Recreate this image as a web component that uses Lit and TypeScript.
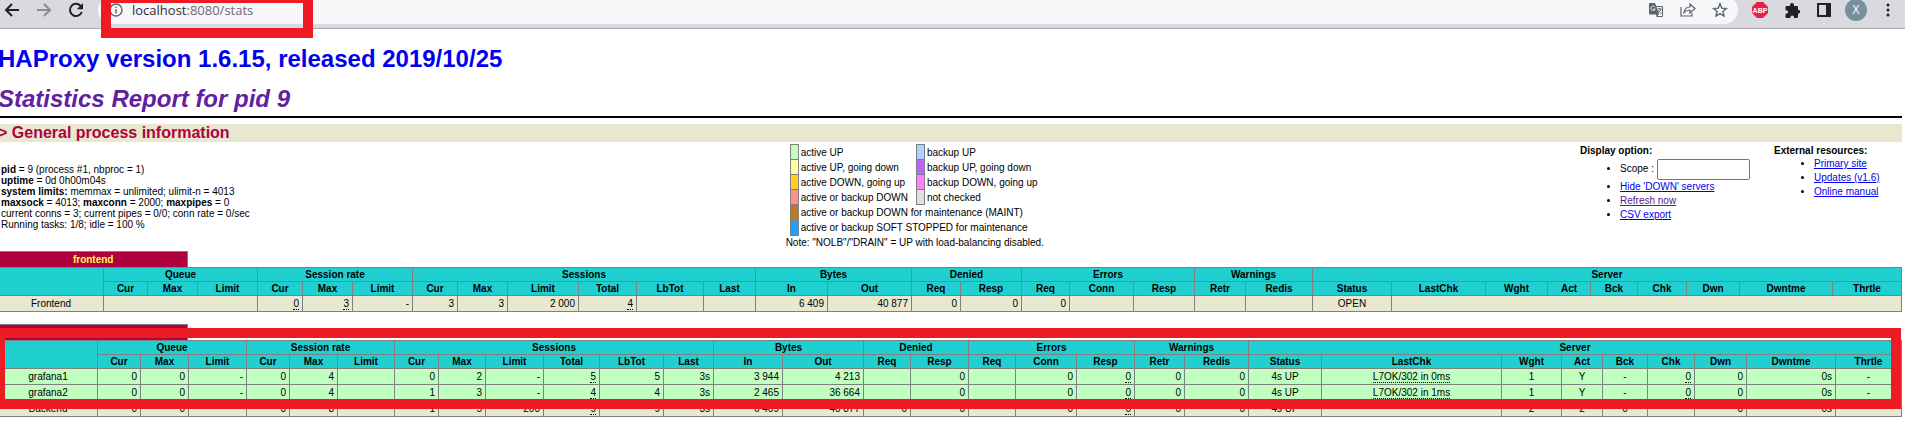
import { LitElement, html, css, nothing } from "lit";
import { customElement, property } from "lit/decorators.js";

interface Group { label: string; columns: string[]; }

const GROUPS: Group[] = [
  { label: "Queue", columns: ["Cur", "Max", "Limit"] },
  { label: "Session rate", columns: ["Cur", "Max", "Limit"] },
  { label: "Sessions", columns: ["Cur", "Max", "Limit", "Total", "LbTot", "Last"] },
  { label: "Bytes", columns: ["In", "Out"] },
  { label: "Denied", columns: ["Req", "Resp"] },
  { label: "Errors", columns: ["Req", "Conn", "Resp"] },
  { label: "Warnings", columns: ["Retr", "Redis"] },
  { label: "Server", columns: ["Status", "LastChk", "Wght", "Act", "Bck", "Chk", "Dwn", "Dwntme", "Thrtle"] },
];

interface Cell { text: string; span?: number; align?: "center"; tip?: boolean; }
interface Row { name: string; kind: "plain" | "up"; cells: Cell[]; }
interface Proxy { name: string; weights: number[]; rows: Row[]; marked?: boolean; }

const n = (text: string): Cell => ({ text });
const t = (text: string): Cell => ({ text, tip: true });
const c = (text: string): Cell => ({ text, align: "center" });
const tc = (text: string): Cell => ({ text, align: "center", tip: true });
const gap = (span: number): Cell => ({ text: "", span });

const PROXIES: Proxy[] = [
  {
    name: "frontend",
    weights: [105, 44, 50, 60, 45, 50, 60, 45, 50, 71, 58, 67, 52, 72, 84, 49, 61, 48, 64, 61, 51, 67, 79, 94, 62, 43, 47, 49, 53, 93, 69],
    rows: [
      {
        name: "Frontend", kind: "plain",
        cells: [gap(3), t("0"), t("3"), n("-"), n("3"), n("3"), n("2 000"), t("4"), n(""), n(""), n("6 409"), n("40 877"),
          n("0"), n("0"), n("0"), n(""), n(""), n(""), n(""), c("OPEN"), gap(8)],
      },
    ],
  },
  {
    name: "backend",
    marked: true,
    weights: [99, 43, 48, 58, 43, 48, 57, 44, 47, 58, 56, 64, 50, 69, 81, 47, 58, 47, 61, 58, 50, 64, 73, 180, 60, 41, 45, 47, 52, 89, 66],
    rows: [
      {
        name: "grafana1", kind: "up",
        cells: [n("0"), n("0"), n("-"), n("0"), n("4"), n(""), n("0"), n("2"), n("-"), t("5"), n("5"), n("3s"), n("3 944"), n("4 213"),
          n(""), n("0"), n(""), n("0"), t("0"), n("0"), n("0"), c("4s UP"), tc("L7OK/302 in 0ms"), c("1"), c("Y"), c("-"), t("0"), n("0"), n("0s"), c("-")],
      },
      {
        name: "grafana2", kind: "up",
        cells: [n("0"), n("0"), n("-"), n("0"), n("4"), n(""), n("1"), n("3"), n("-"), t("4"), n("4"), n("3s"), n("2 465"), n("36 664"),
          n(""), n("0"), n(""), n("0"), t("0"), n("0"), n("0"), c("4s UP"), tc("L7OK/302 in 1ms"), c("1"), c("Y"), c("-"), t("0"), n("0"), n("0s"), c("-")],
      },
      {
        name: "Backend", kind: "plain",
        cells: [n("0"), n("0"), n(""), n("0"), n("8"), n(""), n("1"), n("5"), n("200"), t("9"), n("9"), n("3s"), n("6 409"), n("40 877"),
          n("0"), n("0"), n(""), n("0"), t("0"), n("0"), n("0"), c("4s UP"), c(""), c("2"), c("2"), c("0"), n(""), n("0"), n("0s"), n("")],
      },
    ],
  },
];

@customElement("browser-bar")
class BrowserBar extends LitElement {
  static styles = css`
    :host { display: block; position: relative; font-family: "Open Sans", "Noto Sans", sans-serif; }
    .bar { display: flex; align-items: flex-end; height: 28px; overflow: hidden; background: #d9dadf; border-bottom: 1px solid #a9a9ae; }
    button { display: flex; align-items: center; justify-content: center; border: 0; padding: 0; background: none; color: #202124; }
    svg { display: block; }
    .nav { display: flex; width: 98px; height: 36px; flex: none; }
    .nav button { width: 24px; margin-right: 8px; }
    .nav .off { color: #8b8c90; }
    .pill { flex: 1; display: flex; align-items: center; height: 28px; margin-bottom: 4px; border-radius: 14px; background: #f5f7f9; padding: 0 8px; }
    .addr { flex: 1; font-size: 13px; line-height: 20px; color: #6b6c70; margin-left: 6px; }
    .host { color: #303134; }
    .pill button { width: 20px; height: 20px; margin-left: 12px; color: #5f6368; }
    .pill .info { margin-left: 0; }
    .ext { display: flex; align-items: center; height: 36px; gap: 12px; padding: 0 7px 0 12px; flex: none; }
    .ext button { width: 20px; height: 20px; }
    .ext .face { width: 22px; height: 22px; margin: 0 -1px; border-radius: 11px; background: #78909c; color: #fff; font: 12px/22px "Open Sans", sans-serif; }
    .mark { position: absolute; left: 101px; top: -7px; width: 192px; height: 25px; border: 10px solid #ed1c24; pointer-events: none; }
  `;
  render() {
    return html`
      <div class="bar">
        <div class="nav">
          <button aria-label="Back"><svg width="16" height="16" viewBox="0 0 16 16" fill="none" stroke="currentColor" stroke-width="2"><path d="M15 8H2M8 2 2 8l6 6"/></svg></button>
          <button class="off" aria-label="Forward"><svg width="16" height="16" viewBox="0 0 16 16" fill="none" stroke="currentColor" stroke-width="2"><path d="M1 8h13M8 2l6 6-6 6"/></svg></button>
          <button aria-label="Reload"><svg width="16" height="16" viewBox="0 0 16 16" fill="none" stroke="currentColor" stroke-width="2"><path d="M13.800 10A6.100 6.100 0 1 1 12.400 3.600L14 5.200"/><path d="M15 1v6.200H8.800z" fill="currentColor" stroke="none"/></svg></button>
        </div>
        <div class="pill">
          <button class="info" aria-label="Site information"><svg width="14" height="14" viewBox="0 0 14 14" fill="none" stroke="currentColor" stroke-width="1.400"><circle cx="7" cy="7" r="6"/><path d="M7 6v4.500M7 3.500V5"/></svg></button>
          <div class="addr"><span class="host">localhost</span>:8080/stats</div>
          <button aria-label="Translate"><svg width="14" height="14" viewBox="0 0 14 14"><path d="M1 0h5l1.200 3H13a1 1 0 0 1 1 1v9a1 1 0 0 1-1 1H7.500L7 11.500H1a1 1 0 0 1-1-1V1a1 1 0 0 1 1-1z" fill="currentColor"/><path d="M7.600 4H13v9H8.500l1.500-2z" fill="#f5f7f9"/><path d="M6 4.200A2.200 2.200 0 1 0 6.200 6H4.200" stroke="#f5f7f9" fill="none"/><path d="M8.500 6h4M10.500 5v1M12 6c-.5 2-2 3-3 3.500M9.500 7.500c.8 1.500 2 2.500 3 3" stroke="currentColor" fill="none"/></svg></button>
          <button aria-label="Share"><svg width="16" height="14" viewBox="0 0 16 14" fill="none" stroke="currentColor" stroke-width="1.200"><path d="M1 4v9h11v-3"/><path d="M4 9.500C4.500 6 6.500 4 10 4V1l5 4.500-5 4.500V7C7.500 7 5.500 7.800 4 9.500z"/></svg></button>
          <button aria-label="Bookmark"><svg width="16" height="16" viewBox="0 0 16 16" fill="none" stroke="currentColor" stroke-width="1.400"><path d="m8 1.800 1.800 4.300 4.600.4-3.500 3 1.100 4.600L8 11.600l-4 2.500 1.100-4.600-3.500-3 4.600-.4z"/></svg></button>
        </div>
        <div class="ext">
          <button aria-label="Ad blocker"><svg width="16" height="16" viewBox="0 0 16 16"><path d="M5 0h6l5 5v6l-5 5H5l-5-5V5z" fill="#ed1e45"/><text x="8" y="11" text-anchor="middle" font-size="7" font-weight="700" font-family="Liberation Sans" fill="#fff">ABP</text></svg></button>
          <button aria-label="Extensions"><svg width="15" height="15" viewBox="0 0 15 15" fill="currentColor"><path d="M1.500 3H5V2a2 2 0 0 1 4 0v1h3a1 1 0 0 1 1 1v3h.5a1.700 1.700 0 0 1 0 3.500H13V14a1 1 0 0 1-1 1H9v-.8a1.800 1.800 0 0 0-3.600 0v.8H1.500a1 1 0 0 1-1-1v-3.200h.8a1.700 1.700 0 0 0 0-3.500H.5V4a1 1 0 0 1 1-1z"/></svg></button>
          <button aria-label="Side panel"><svg width="14" height="14" viewBox="0 0 14 14"><path d="M0 0h14v14H0zM2 2v10h7V2z" fill="currentColor" fill-rule="evenodd"/></svg></button>
          <button class="face" aria-label="Profile">X</button>
          <button aria-label="Menu"><svg width="4" height="14" viewBox="0 0 4 14" fill="currentColor"><circle cx="2" cy="2" r="1.500"/><circle cx="2" cy="7" r="1.500"/><circle cx="2" cy="12" r="1.500"/></svg></button>
        </div>
      </div>
      <div class="mark"></div>
    `;
  }
}

@customElement("proxy-table")
class ProxyTable extends LitElement {
  @property({ attribute: false }) proxy!: Proxy;
  static styles = css`
    :host { display: block; position: relative; }
    h4 { box-sizing: border-box; width: 10%; height: 16px; margin: 0; border: 1px solid gray; border-bottom: 0;
      background: #b00040; color: #ffff40; font-size: 10px; line-height: 16px; text-align: center; }
    table { width: 100%; table-layout: fixed; border-collapse: collapse; font-size: 10px; line-height: 12px; }
    th, td { border: 1px solid gray; white-space: nowrap; }
    th { padding: 0; background: #20d0d0; }
    td { padding: 0 3px; text-align: right; }
    .head { height: 14px; }
    .row { height: 16px; }
    .plain { background: #e8e8d0; }
    .up { background: #c0ffc0; }
    .name, .center { text-align: center; }
    .tip { text-decoration: none; display: inline-block; line-height: 11px; border-bottom: 1px dotted #000; }
    .mark { position: absolute; inset: 4px 1px 8px -3px; border: 10px solid #ed1c24; pointer-events: none; }
  `;
  render() {
    const p = this.proxy;
    const total = p.weights.reduce((a, b) => a + b, 0);
    return html`
      <h4>${p.name}</h4>
      <table>
        <colgroup>${p.weights.map((w) => html`<col style="width:${(w / total) * 100}%">`)}</colgroup>
        <thead>
          <tr class="head"><th rowspan="2"></th>${GROUPS.map((g) => html`<th colspan=${g.columns.length}>${g.label}</th>`)}</tr>
          <tr class="head">${GROUPS.map((g) => g.columns.map((l) => html`<th>${l}</th>`))}</tr>
        </thead>
        <tbody>
          ${p.rows.map((r) => html`<tr class="row ${r.kind}"><td class="name">${r.name}</td>${r.cells.map((x) =>
            html`<td class=${x.align ?? "num"} colspan=${x.span ?? 1}>${x.tip ? html`<u class="tip">${x.text}</u>` : x.text}</td>`)}</tr>`)}
        </tbody>
      </table>
      ${p.marked ? html`<div class="mark"></div>` : nothing}
    `;
  }
}

@customElement("app-root")
class AppRoot extends LitElement {
  static styles = css`
    :host { display: block; min-height: 100vh; overflow: hidden; background: #fff; color: #000;
      font-family: "Liberation Sans", Arial, sans-serif; font-size: 10px; line-height: 11px; }
    main { margin: 0 3px 0 -2px; }
    h1, h2 { margin: 0; font-size: 24px; line-height: 28px; }
    h1 { padding-top: 16px; }
    h1 a { color: #0000ee; text-decoration: none; }
    h2 { padding-top: 12px; font-style: italic; }
    h2 a { color: #6020a0; text-decoration: none; }
    hr { height: 2px; margin: 3px 0 6px; border: 0; background: #000; }
    h3 { margin: 0; font-size: 16px; line-height: 18px; color: #b00040; background: #e8e8d0; }
    .process { display: flex; padding-bottom: 4px; }
    .facts { width: 41%; box-sizing: border-box; margin: 0; padding: 22px 0 0 3px; }
    .legend { flex: 1; padding: 2px 0 0 4px; }
    .keys { border-collapse: collapse; margin-left: 7px; }
    .keys td { height: 15px; padding: 0 2px; }
    .keys .swatch { width: 8px; box-sizing: border-box; padding: 0; border: 1px solid gray; }
    .keys .wide { padding-right: 8px; }
    .note { margin: 1px 0 0 3px; }
    .active-up { background: #c0ffc0; }
    .backup-up { background: #b0d0ff; }
    .active-going-down { background: #ffffa0; }
    .backup-going-down { background: #c060ff; }
    .active-going-up { background: #ffd020; }
    .backup-going-up { background: #ff80ff; }
    .down { background: #ff9090; }
    .unchecked { background: #e0e0e0; }
    .maint { background: #c07820; }
    .soft { background: #20a0ff; }
    .options, .external { padding-top: 3px; line-height: 12px; }
    .options { width: 194px; }
    .external { width: 128px; }
    ul { margin: 0; padding: 0 0 0 40px; line-height: 14px; }
    .options ul { padding-top: 2px; }
    a { color: #0000ee; }
    a.seen { color: #551a8b; }
    input { box-sizing: border-box; width: 93px; height: 21px; border: 1px solid #767676; border-radius: 2px; vertical-align: middle; font: inherit; }
    .proxies { display: grid; gap: 12px; min-height: 176px; align-content: start; }
    .process { height: 105px; }
  `;
  private keys: [string, string, string, string][] = [
    ["active-up", "active UP", "backup-up", "backup UP"],
    ["active-going-down", "active UP, going down", "backup-going-down", "backup UP, going down"],
    ["active-going-up", "active DOWN, going up", "backup-going-up", "backup DOWN, going up"],
    ["down", "active or backup DOWN", "unchecked", "not checked"],
  ];
  render() {
    return html`
      <browser-bar></browser-bar>
      <main>
        <h1><a href="#home">HAProxy version 1.6.15, released 2019/10/25</a></h1>
        <h2><a href="#stats">Statistics Report for pid 9</a></h2>
        <hr>
        <h3>&gt; General process information</h3>
        <section class="process">
          <p class="facts">
            <b>pid</b> = 9 (process #1, nbproc = 1)<br>
            <b>uptime</b> = 0d 0h00m04s<br>
            <b>system limits:</b> memmax = unlimited; ulimit-n = 4013<br>
            <b>maxsock</b> = 4013; <b>maxconn</b> = 2000; <b>maxpipes</b> = 0<br>
            current conns = 3; current pipes = 0/0; conn rate = 0/sec<br>
            Running tasks: 1/8; idle = 100 %
          </p>
          <div class="legend">
            <table class="keys">
              ${this.keys.map(([a, al, b, bl]) => html`<tr><td class="swatch ${a}"></td><td class="wide">${al}</td><td class="swatch ${b}"></td><td>${bl}</td></tr>`)}
              <tr><td class="swatch maint"></td><td colspan="3">active or backup DOWN for maintenance (MAINT)</td></tr>
              <tr><td class="swatch soft"></td><td colspan="3">active or backup SOFT STOPPED for maintenance</td></tr>
            </table>
            <p class="note">Note: "NOLB"/"DRAIN" = UP with load-balancing disabled.</p>
          </div>
          <div class="options">
            <b>Display option:</b>
            <ul>
              <li><label for="scope">Scope :</label> <input id="scope" type="text"></li>
              <li><a href="#hide">Hide 'DOWN' servers</a></li>
              <li><a class="seen" href="#refresh">Refresh now</a></li>
              <li><a href="#csv">CSV export</a></li>
            </ul>
          </div>
          <div class="external">
            <b>External resources:</b>
            <ul>
              <li><a href="#site">Primary site</a></li>
              <li><a href="#updates">Updates (v1.6)</a></li>
              <li><a href="#manual">Online manual</a></li>
            </ul>
          </div>
        </section>
        <section class="proxies">
          ${PROXIES.map((p) => html`<proxy-table .proxy=${p}></proxy-table>`)}
        </section>
      </main>
    `;
  }
}
